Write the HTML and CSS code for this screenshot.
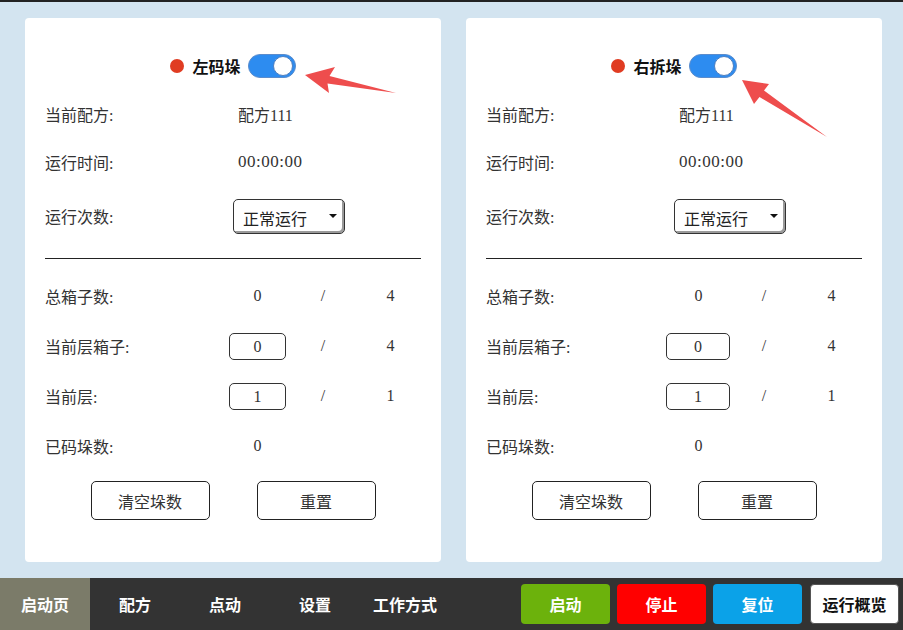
FILE: index.html
```html
<!doctype html>
<html lang="zh-CN">
  <head>
    <meta charset="UTF-8" />
    <meta name="viewport" content="width=device-width, initial-scale=1.0" />
    <title>启动页</title>
    <link rel="stylesheet" href="styles.css">
  </head>
  <body>
    <div class="page">
      <main class="panels">
        <!-- left stacker -->
        <section class="card">
          <div class="card-head">
            <span class="dot"></span>
            <span class="head-title">左码垛</span>
            <span class="switch on"><span class="knob"></span></span>
          </div>
          <div class="row">
            <span class="label">当前配方:</span>
            <span class="value">配方111</span>
          </div>
          <div class="row">
            <span class="label">运行时间:</span>
            <span class="value time">00:00:00</span>
          </div>
          <div class="row row-select">
            <span class="label">运行次数:</span>
            <div class="select-box">正常运行</div>
          </div>
          <hr class="divider" />
          <div class="row count">
            <span class="label">总箱子数:</span>
            <span class="num">0</span>
            <span class="sep">/</span>
            <span class="total">4</span>
          </div>
          <div class="row count">
            <span class="label">当前层箱子:</span>
            <span class="num"><span class="num-box">0</span></span>
            <span class="sep">/</span>
            <span class="total">4</span>
          </div>
          <div class="row count">
            <span class="label">当前层:</span>
            <span class="num"><span class="num-box">1</span></span>
            <span class="sep">/</span>
            <span class="total">1</span>
          </div>
          <div class="row count">
            <span class="label">已码垛数:</span>
            <span class="num">0</span>
          </div>
          <div class="actions">
            <button class="btn-outline">清空垛数</button>
            <button class="btn-outline">重置</button>
          </div>
        </section>

        <!-- right unstacker -->
        <section class="card">
          <div class="card-head">
            <span class="dot"></span>
            <span class="head-title">右拆垛</span>
            <span class="switch on"><span class="knob"></span></span>
          </div>
          <div class="row">
            <span class="label">当前配方:</span>
            <span class="value">配方111</span>
          </div>
          <div class="row">
            <span class="label">运行时间:</span>
            <span class="value time">00:00:00</span>
          </div>
          <div class="row row-select">
            <span class="label">运行次数:</span>
            <div class="select-box">正常运行</div>
          </div>
          <hr class="divider" />
          <div class="row count">
            <span class="label">总箱子数:</span>
            <span class="num">0</span>
            <span class="sep">/</span>
            <span class="total">4</span>
          </div>
          <div class="row count">
            <span class="label">当前层箱子:</span>
            <span class="num"><span class="num-box wide">0</span></span>
            <span class="sep">/</span>
            <span class="total">4</span>
          </div>
          <div class="row count">
            <span class="label">当前层:</span>
            <span class="num"><span class="num-box wide">1</span></span>
            <span class="sep">/</span>
            <span class="total">1</span>
          </div>
          <div class="row count">
            <span class="label">已码垛数:</span>
            <span class="num">0</span>
          </div>
          <div class="actions">
            <button class="btn-outline">清空垛数</button>
            <button class="btn-outline">重置</button>
          </div>
        </section>
      </main>

      <nav class="bottom-bar">
        <div class="tabs">
          <a class="tab active">启动页</a>
          <a class="tab">配方</a>
          <a class="tab">点动</a>
          <a class="tab">设置</a>
          <a class="tab">工作方式</a>
        </div>
        <div class="controls">
          <button class="ctrl start">启动</button>
          <button class="ctrl stop">停止</button>
          <button class="ctrl reset">复位</button>
          <button class="ctrl overview">运行概览</button>
        </div>
      </nav>

      <!-- callout arrows pointing at the switches -->
      <svg class="callouts" width="903" height="630" viewBox="0 0 903 630" aria-hidden="true">
        <polygon points="305,73 335,65 329.5,74 396,91 327.5,81.5 329,91" />
        <polygon points="742,78 769,82 764,88.5 827,135 759.5,95 754,102" />
      </svg>
    </div>
  </body>
</html>
```

FILE: styles.css
```css
* {
  box-sizing: border-box;
}

body {
  margin: 0;
  padding: 0;
  font-family: "Liberation Serif", "Noto Sans CJK SC", serif;
  color: #333;
  background: #d3e4f0;
}

.page {
  position: relative;
  width: 903px;
  height: 630px;
  display: flex;
  flex-direction: column;
  border-top: 2px solid #222;
  overflow: hidden;
}

.panels {
  flex: 1;
  display: flex;
  gap: 25px;
  padding: 16px 22px 16px 25px;
}

.card {
  flex: 1;
  background: #fff;
  border-radius: 4px;
  padding: 24px 20px 0;
  display: flex;
  flex-direction: column;
}

.card-head {
  height: 48px;
  display: flex;
  align-items: center;
  justify-content: center;
}

.dot {
  width: 14px;
  height: 14px;
  border-radius: 50%;
  background: #e03c22;
  margin-right: 8px;
}

.head-title {
  font-weight: bold;
  font-size: 16px;
  color: #111;
  margin-right: 7px;
}

.switch {
  position: relative;
  width: 48px;
  height: 24px;
  border-radius: 12px;
  background: #ccc;
  border: 1px solid #5b8ccc;
}

.switch.on {
  background: #2d8cf0;
}

.knob {
  position: absolute;
  top: 1px;
  right: 2px;
  width: 20px;
  height: 20px;
  border-radius: 50%;
  background: #fff;
  border: 1px solid #4f7fbf;
}

.row {
  height: 48px;
  display: flex;
  align-items: center;
  font-size: 16px;
}

.label {
  width: 193px;
  flex-shrink: 0;
}

.value {
  color: #333;
}

.value.time {
  font-size: 17px;
  letter-spacing: 0.5px;
}

.row-select {
  height: 60px;
}

.row-select .label {
  width: 188px;
}

.select-box {
  position: relative;
  width: 112px;
  height: 35px;
  border: 1px solid #333;
  border-radius: 5px;
  padding: 6px 0 0 9px;
  font-family: "Noto Sans CJK SC", sans-serif;
  font-size: 16px;
  color: #222;
  box-shadow: inset -2px -2px 0 #9a9a9a;
}

.select-box::after {
  content: "";
  position: absolute;
  right: 7px;
  top: 14px;
  border-left: 4px solid transparent;
  border-right: 4px solid transparent;
  border-top: 4px solid #111;
}

.divider {
  margin: 12px 0 12px;
  border: 0;
  border-top: 1px solid #222;
}

.count {
  height: 50px;
}

.count .label {
  width: 184px;
}

.num {
  width: 57px;
  text-align: center;
}

.num-box {
  display: block;
  width: 57px;
  height: 27px;
  line-height: 25px;
  border: 1px solid #333;
  border-radius: 5px;
}

.num-box.wide {
  width: 64px;
  margin-left: -4px;
}

.sep {
  width: 74px;
  text-align: center;
}

.total {
  width: 61px;
  text-align: center;
}

.actions {
  margin-top: 10px;
  display: flex;
  justify-content: center;
  gap: 47px;
}

.btn-outline {
  width: 119px;
  height: 39px;
  background: #fff;
  border: 1px solid #222;
  border-radius: 5px;
  font-family: "Liberation Serif", "Noto Sans CJK SC", serif;
  font-size: 16px;
  color: #333;
}

.bottom-bar {
  height: 52px;
  background: #333;
  display: flex;
  justify-content: space-between;
}

.tabs {
  display: flex;
}

.tab {
  width: 90px;
  display: flex;
  align-items: center;
  justify-content: center;
  color: #fff;
  font-weight: bold;
  font-size: 16px;
}

.tab.active {
  background: #7b7b69;
}

.controls {
  display: flex;
  align-items: center;
  gap: 7px;
  padding-right: 4px;
}

.ctrl {
  width: 89px;
  height: 40px;
  border: 0;
  border-radius: 4px;
  font-family: "Liberation Serif", "Noto Sans CJK SC", serif;
  font-weight: bold;
  font-size: 16px;
  color: #fff;
}

.ctrl.start {
  background: #6cb20c;
}

.ctrl.stop {
  background: #ff0000;
}

.ctrl.reset {
  background: #0ba2e8;
}

.ctrl.overview {
  margin-left: 1px;
  background: #fff;
  color: #111;
  border: 1px solid #555;
}

.callouts {
  position: absolute;
  left: 0;
  top: 0;
  pointer-events: none;
}

.callouts polygon {
  fill: #ee4d4d;
}
```
